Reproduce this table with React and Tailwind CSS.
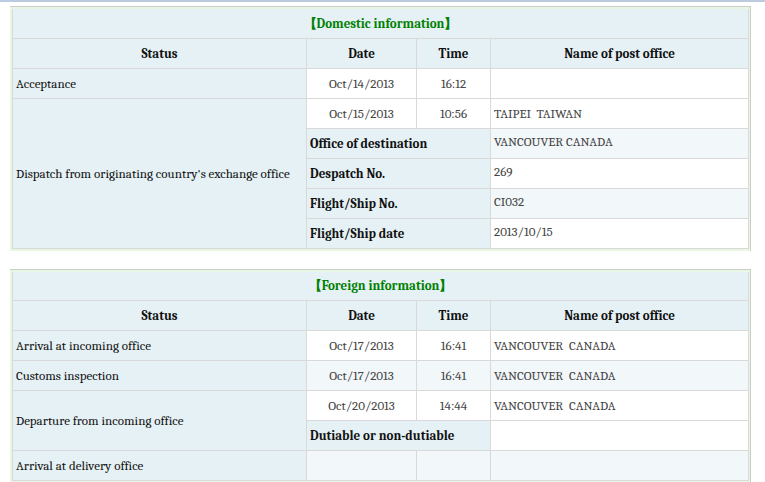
import React from 'react';

const LABEL = 'bg-[#e6f1f6]';
const WHITE = 'bg-white';
const LIGHT = 'bg-[#f2f7fa]';
const cell = 'border border-[#d9d9d9] p-0 align-middle';
const data = 'text-[#444]';

const Title = ({ text }) => (
    <tr className="h-[29px]">
        <td colSpan={4} className={`${cell} border-t-0 ${LABEL} text-center font-bold text-[#008000]`}>
            {text}
        </td>
    </tr>
);

const Header = () => (
    <tr className="h-[30px]">
        <th className={`${cell} ${LABEL} font-bold text-center`}>Status</th>
        <th className={`${cell} ${LABEL} font-bold text-center`}>Date</th>
        <th className={`${cell} ${LABEL} font-bold text-center`}>Time</th>
        <th className={`${cell} ${LABEL} font-bold text-center`}>Name of post office</th>
    </tr>
);

const EventCells = ({ date, time, office, bg }) => (
    <>
        <td className={`${cell} ${bg} ${data} text-center`}>{date}</td>
        <td className={`${cell} ${bg} ${data} text-center`}>{time}</td>
        <td className={`${cell} ${bg} ${data} pl-[3px] whitespace-pre`}>{office}</td>
    </>
);

const SubRow = ({ label, value, bg }) => (
    <tr className="h-[30px]">
        <td colSpan={2} className={`${cell} ${LABEL} font-bold pl-[3px]`}>{label}</td>
        <td className={`${cell} ${bg} ${data} pl-[3px] pb-[3px]`}>{value}</td>
    </tr>
);

const Box = ({ children, className = '' }) => (
    <div className={`ml-[10px] w-[741px] border-t border-r border-[#cccccc] bg-[#e8f7e3] p-[2px] ${className}`}>
        <table className="w-[736px] table-fixed border-collapse">
            <colgroup>
                <col className="w-[294px]" />
                <col className="w-[110px]" />
                <col className="w-[74px]" />
                <col className="w-[258px]" />
            </colgroup>
            <tbody>{children}</tbody>
        </table>
    </div>
);

export default function App() {
    return (
        <div className="min-h-screen bg-white font-serif [font-family:Liberation_Serif,Times_New_Roman,serif] text-[13px] leading-[15px] text-[#111]">
            <div className="h-[2px] bg-[#bccbdf]" />
            <div className="pt-[4px]">
                <Box>
                    <Title text="【Domestic information】" />
                    <Header />
                    <tr className="h-[30px]">
                        <td className={`${cell} ${LABEL} pl-[3px]`}>Acceptance</td>
                        <EventCells date="Oct/14/2013" time="16:12" office="" bg={WHITE} />
                    </tr>
                    <tr className="h-[30px]">
                        <td rowSpan={5} className={`${cell} ${LABEL} pl-[3px]`}>
                            Dispatch from originating country's exchange office
                        </td>
                        <EventCells date="Oct/15/2013" time="10:56" office="TAIPEI  TAIWAN" bg={WHITE} />
                    </tr>
                    <SubRow label="Office of destination" value="VANCOUVER CANADA" bg={LIGHT} />
                    <SubRow label="Despatch No." value="269" bg={WHITE} />
                    <SubRow label="Flight/Ship No." value="CI032" bg={LIGHT} />
                    <SubRow label="Flight/Ship date" value="2013/10/15" bg={WHITE} />
                </Box>

                <Box className="mt-[18px]">
                    <Title text="【Foreign information】" />
                    <Header />
                    <tr className="h-[30px]">
                        <td className={`${cell} ${LABEL} pl-[3px]`}>Arrival at incoming office</td>
                        <EventCells date="Oct/17/2013" time="16:41" office="VANCOUVER  CANADA" bg={WHITE} />
                    </tr>
                    <tr className="h-[30px]">
                        <td className={`${cell} ${LABEL} pl-[3px]`}>Customs inspection</td>
                        <EventCells date="Oct/17/2013" time="16:41" office="VANCOUVER  CANADA" bg={LIGHT} />
                    </tr>
                    <tr className="h-[30px]">
                        <td rowSpan={2} className={`${cell} ${LABEL} pl-[3px]`}>Departure from incoming office</td>
                        <EventCells date="Oct/20/2013" time="14:44" office="VANCOUVER  CANADA" bg={WHITE} />
                    </tr>
                    <SubRow label="Dutiable or non-dutiable" value="" bg={WHITE} />
                    <tr className="h-[30px]">
                        <td className={`${cell} ${LABEL} pl-[3px]`}>Arrival at delivery office</td>
                        <EventCells date="" time="" office="" bg={LIGHT} />
                    </tr>
                </Box>
            </div>
        </div>
    );
}
